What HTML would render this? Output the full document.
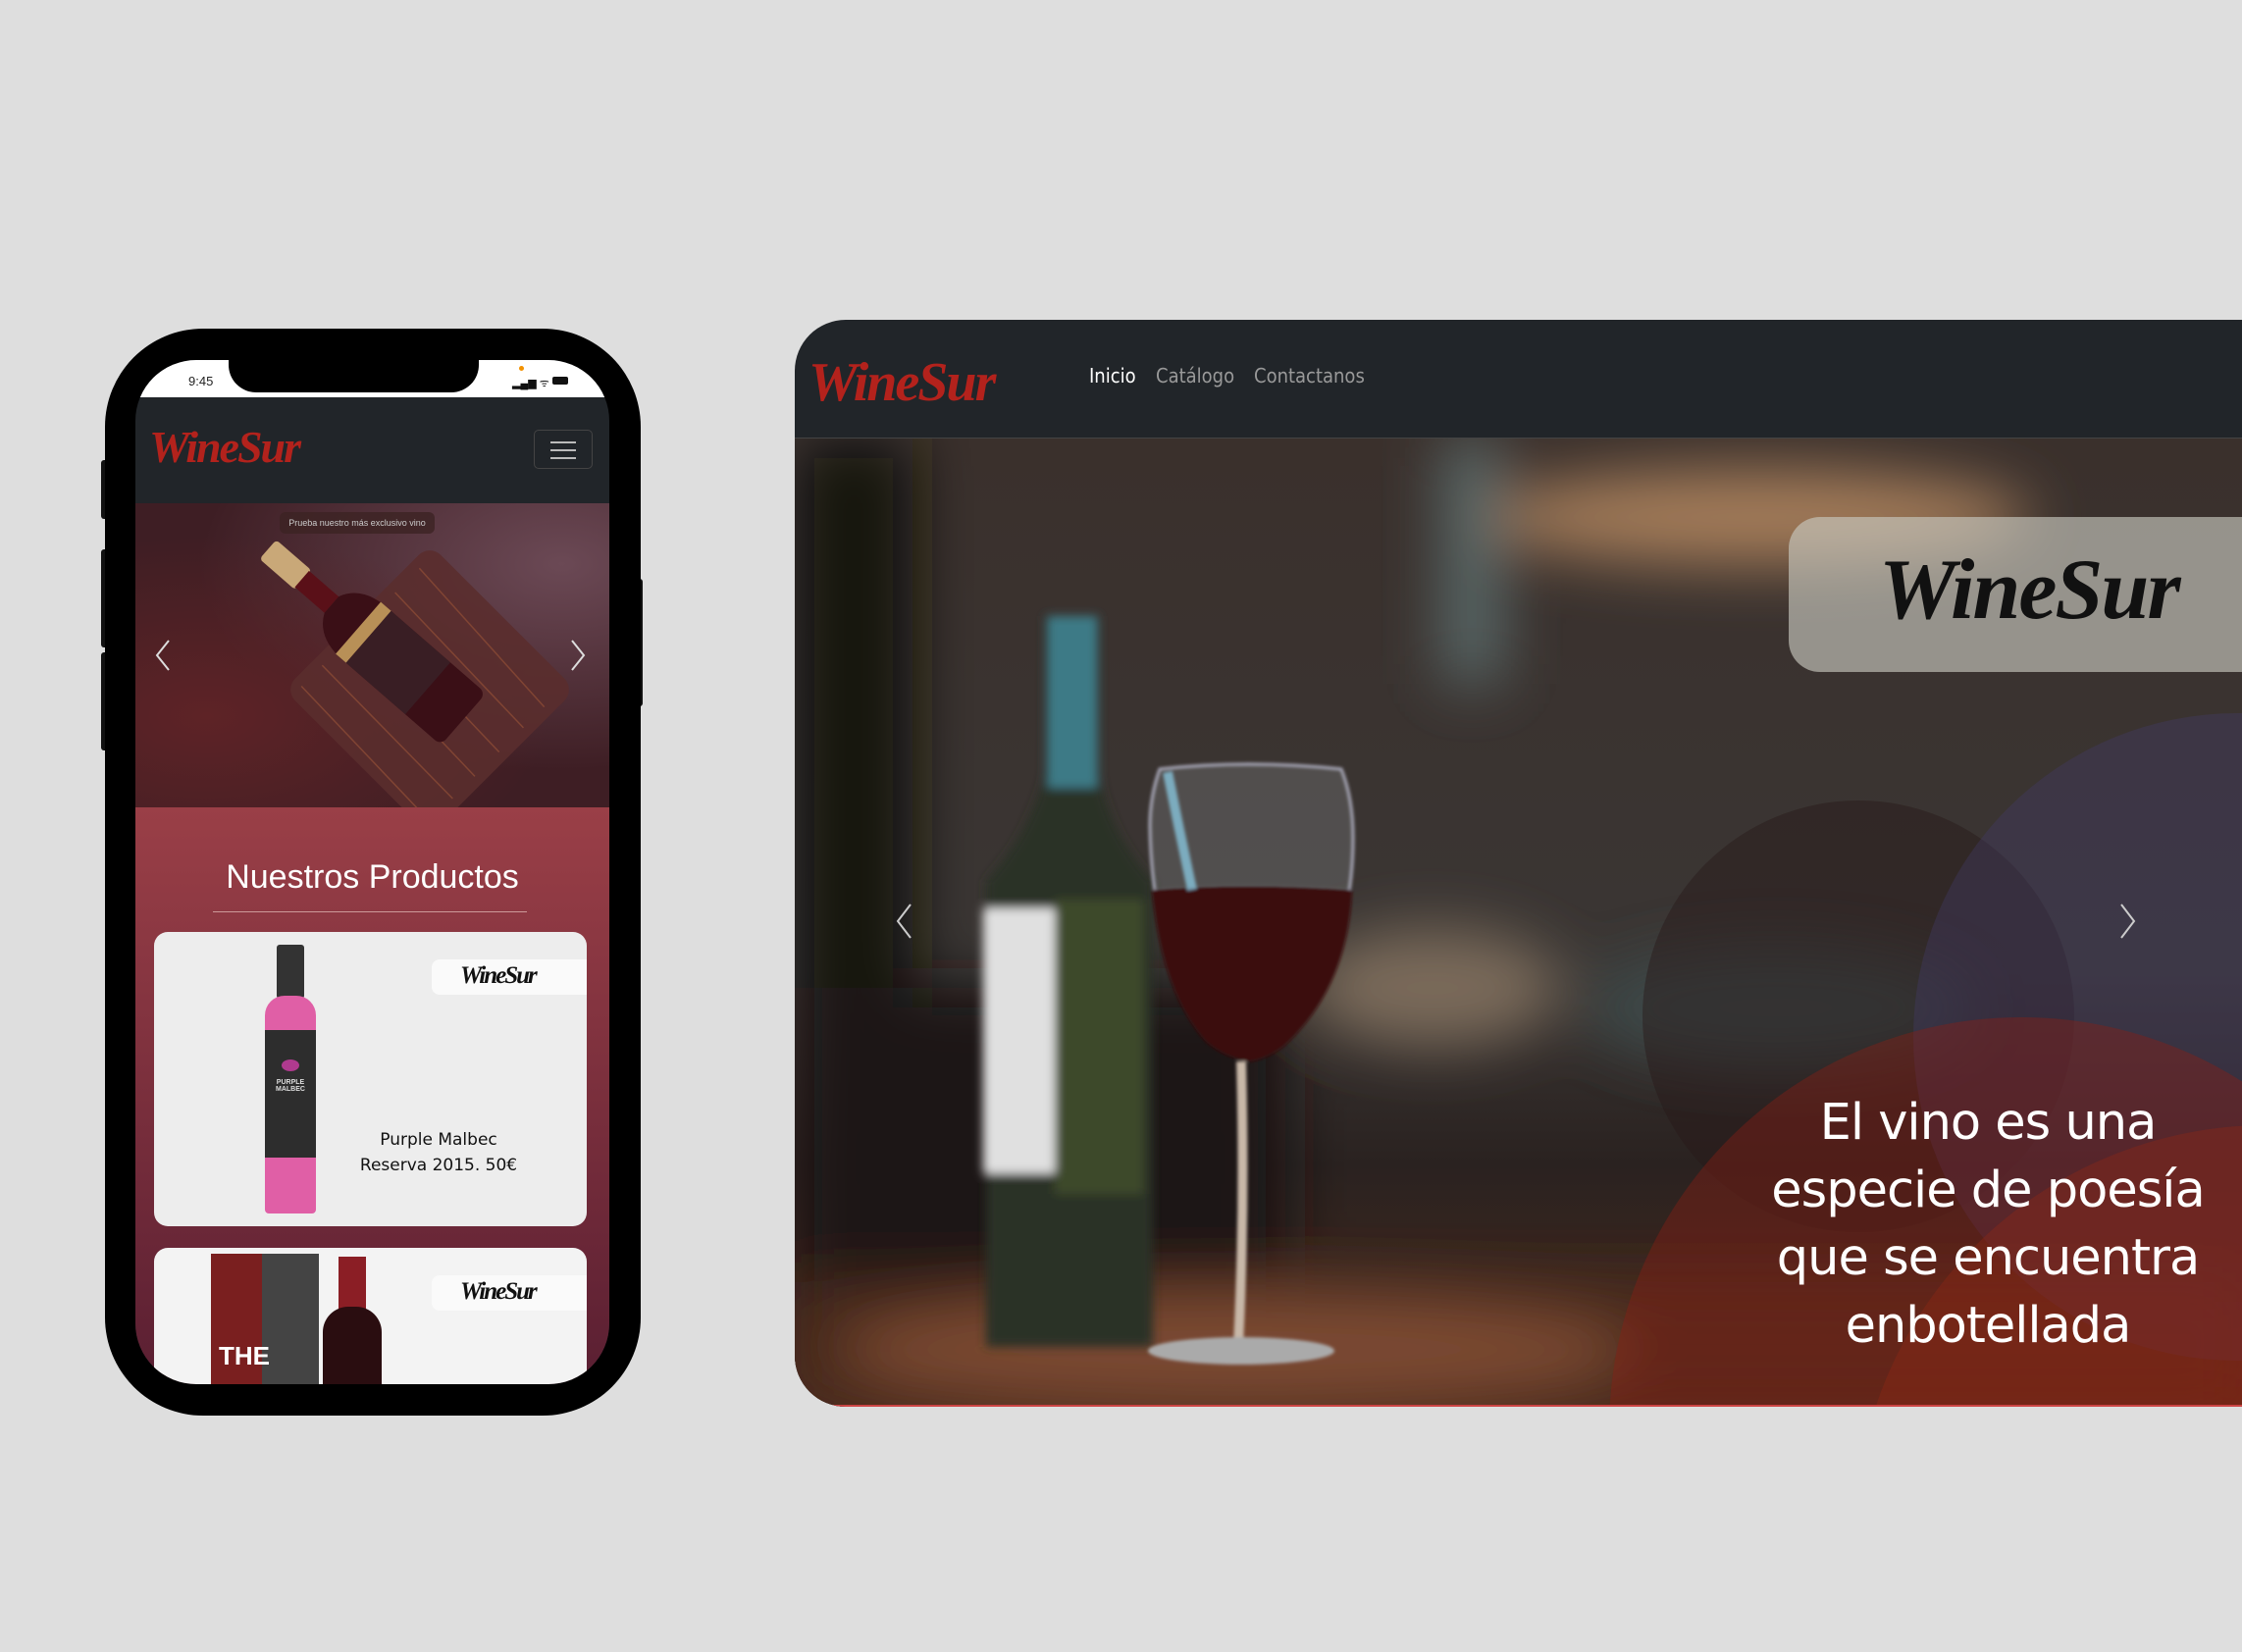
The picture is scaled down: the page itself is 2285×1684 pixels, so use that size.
<!DOCTYPE html>
<html><head><meta charset="utf-8"><style>
*{margin:0;padding:0;box-sizing:border-box}
html{width:2285px;height:1684px;overflow:hidden}
body{width:2285px;height:1684px;background:#dedede;position:relative;overflow:hidden;font-family:"Liberation Sans",sans-serif}
.abs{position:absolute}
.logo{font-family:"Liberation Serif",serif;font-style:italic;font-weight:bold;color:#b3221c;letter-spacing:-2px}
</style></head><body>

<!-- PHONE -->
<div class="abs" style="left:103px;top:469px;width:8px;height:60px;background:#111;border-radius:3px"></div>
<div class="abs" style="left:103px;top:560px;width:8px;height:100px;background:#111;border-radius:3px"></div>
<div class="abs" style="left:103px;top:665px;width:8px;height:100px;background:#111;border-radius:3px"></div>
<div class="abs" style="left:645px;top:590px;width:10px;height:130px;background:#111;border-radius:3px"></div>
<div class="abs" style="left:107px;top:335px;width:546px;height:1108px;background:#000;border-radius:100px"></div>
<div class="abs" style="left:138px;top:367px;width:483px;height:1044px;border-radius:62px;overflow:hidden;background:#212529">
  <div class="abs" style="left:0;top:0;width:483px;height:38px;background:#fff"></div>
  <div class="abs" style="left:95px;top:-5px;width:255px;height:38px;background:#000;border-radius:0 0 28px 28px"></div>
  <div class="abs" style="left:54px;top:14px;font-size:13px;color:#222">9:45</div>
  <div class="abs" style="left:391px;top:6px;width:5px;height:5px;border-radius:50%;background:#f39200"></div>
  <div class="abs" style="left:384px;top:16px;font-size:11px;color:#111">▂▄▆ ᯤ</div>
  <div class="abs" style="left:425px;top:17px;width:16px;height:8px;background:#111;border-radius:2px"></div>
  <div class="abs logo" style="left:14px;top:62px;font-size:46px">WineSur</div>
  <div class="abs" style="left:406px;top:71px;width:60px;height:40px;border:1px solid #444;border-radius:5px">
    <div class="abs" style="left:16px;top:11px;width:26px;height:2px;background:#bbb"></div>
    <div class="abs" style="left:16px;top:19px;width:26px;height:2px;background:#bbb"></div>
    <div class="abs" style="left:16px;top:27px;width:26px;height:2px;background:#bbb"></div>
  </div>
  <!-- carousel -->
  <div class="abs" style="left:0;top:146px;width:483px;height:310px;background:radial-gradient(ellipse at 15% 70%,#5e2326,transparent 60%),radial-gradient(ellipse at 90% 20%,#6b4955,transparent 60%),#3e1e24;overflow:hidden">
    <svg class="abs" style="left:0;top:0" width="483" height="310">
      <g transform="translate(300 190) rotate(45)">
        <rect x="-105" y="-105" width="210" height="210" rx="16" fill="#5a2e2e" opacity=".9"/>
        <g stroke="#8a4a35" stroke-width="1.5" opacity=".8"><line x1="-95" y1="-80" x2="95" y2="-70"/><line x1="-95" y1="-45" x2="95" y2="-40"/><line x1="-95" y1="-10" x2="95" y2="-5"/><line x1="-95" y1="25" x2="95" y2="30"/><line x1="-95" y1="60" x2="95" y2="62"/><line x1="-95" y1="90" x2="95" y2="95"/></g>
      </g>
      <g transform="translate(135 47) rotate(41)">
        <rect x="0" y="-13" width="48" height="26" rx="4" fill="#c9a878"/>
        <rect x="46" y="-11" width="40" height="22" fill="#5a1018"/>
        <path d="M86 -11 q10 -22 40 -24 h130 a8 8 0 0 1 8 8 v54 a8 8 0 0 1 -8 8 h-130 q-30 -2 -40 -24z" fill="#3a0f16"/>
        <rect x="122" y="-35" width="14" height="70" fill="#b89057"/>
        <rect x="136" y="-35" width="80" height="70" fill="#3a2228" opacity=".8"/>
      </g>
      <polyline points="34,140 22,155 34,170" fill="none" stroke="#ddd" stroke-width="2"/>
      <polyline points="445,140 457,155 445,170" fill="none" stroke="#ddd" stroke-width="2"/>
    </svg>
    <div class="abs" style="left:147px;top:9px;width:158px;height:22px;background:rgba(60,35,35,.8);border-radius:6px;color:#ccc;font-size:9px;line-height:22px;text-align:center">Prueba nuestro más exclusivo vino</div>
  </div>
  <!-- products -->
  <div class="abs" style="left:0;top:456px;width:483px;height:588px;overflow:hidden;background:linear-gradient(#9a3f47,#5a1f32)">
    <div class="abs" style="left:0;top:52px;width:483px;text-align:center;color:#fff;font-size:34px">Nuestros Productos</div>
    <div class="abs" style="left:79px;top:106px;width:320px;height:1px;background:#c99"></div>
    <div class="abs" style="left:19px;top:127px;width:441px;height:300px;background:#ededed;border-radius:14px;overflow:hidden">
      <div class="abs" style="left:125px;top:13px;width:28px;height:55px;background:#333;border-radius:3px"></div>
      <div class="abs" style="left:113px;top:65px;width:52px;height:222px;background:#e05fa6;border-radius:20px 20px 4px 4px"></div>
      <div class="abs" style="left:113px;top:100px;width:52px;height:130px;background:#2d2d2d"></div>
      <div class="abs" style="left:130px;top:130px;width:18px;height:12px;background:#b03a8f;border-radius:50%"></div>
      <div class="abs" style="left:114px;top:150px;width:50px;text-align:center;color:#ddd;font-size:7px;font-weight:bold">PURPLE MALBEC</div>
      <div class="abs" style="left:283px;top:28px;width:160px;height:36px;background:#fafafa;border-radius:8px 0 0 8px"></div>
      <div class="abs logo" style="left:312px;top:31px;font-size:25px;color:#111">WineSur</div>
      <div class="abs" style="left:190px;top:199px;width:200px;text-align:center;font-size:17px;color:#111;line-height:26px;font-family:'DejaVu Sans',sans-serif">Purple Malbec<br>Reserva 2015. 50€</div>
    </div>
    <div class="abs" style="left:19px;top:449px;width:441px;height:160px;background:#f3f3f3;border-radius:14px;overflow:hidden">
      <div class="abs" style="left:58px;top:6px;width:52px;height:140px;background:#7a1f1f"></div>
      <div class="abs" style="left:110px;top:6px;width:58px;height:140px;background:#444"></div>
      <div class="abs" style="left:66px;top:95px;color:#fff;font-size:26px;font-weight:bold">THE</div>
      <div class="abs" style="left:188px;top:9px;width:28px;height:60px;background:#8b1e25"></div>
      <div class="abs" style="left:172px;top:60px;width:60px;height:100px;background:#2a0d10;border-radius:26px 26px 0 0"></div>
      <div class="abs" style="left:283px;top:28px;width:160px;height:36px;background:#fafafa;border-radius:8px 0 0 8px"></div>
      <div class="abs logo" style="left:312px;top:31px;font-size:25px;color:#111">WineSur</div>
    </div>
  </div>
</div>

<!-- DESKTOP -->
<div class="abs" style="left:810px;top:326px;width:1475px;height:1108px;border-radius:52px 0 0 52px;overflow:hidden;background:#212529">
  <div class="abs logo" style="left:14px;top:32px;font-size:56px">WineSur</div>
  <div class="abs" style="left:300px;top:45px;font-size:20px;color:#fff;font-family:'DejaVu Sans Condensed','Liberation Sans',sans-serif">Inicio</div>
  <div class="abs" style="left:368px;top:45px;font-size:20px;color:#999;font-family:'DejaVu Sans Condensed','Liberation Sans',sans-serif">Catálogo</div>
  <div class="abs" style="left:468px;top:45px;font-size:20px;color:#999;font-family:'DejaVu Sans Condensed','Liberation Sans',sans-serif">Contactanos</div>
  <div class="abs" style="left:0;top:120px;width:1475px;height:1px;background:#444"></div>
  <div class="abs" style="left:0;top:121px;width:1475px;height:987px;overflow:hidden;background:#2e2622">
    <svg class="abs" style="left:0;top:0" width="1475" height="987">
      <defs>
        <filter id="b" x="-50%" y="-50%" width="200%" height="200%"><feGaussianBlur stdDeviation="30"/></filter>
        <filter id="s"><feGaussianBlur stdDeviation="5"/></filter>
        <filter id="t"><feGaussianBlur stdDeviation="1.5"/></filter>
        <linearGradient id="bg" x1="0" y1="0" x2="0" y2="1"><stop offset="0" stop-color="#3a302c"/><stop offset=".55" stop-color="#3a3634"/><stop offset=".75" stop-color="#2a2220"/><stop offset="1" stop-color="#4a2a1c"/></linearGradient>
      </defs>
      <rect width="1475" height="987" fill="url(#bg)"/>
      <g filter="url(#b)">
        <rect x="0" y="0" width="120" height="987" fill="#181210"/>
        <ellipse cx="980" cy="80" rx="280" ry="50" fill="#a27a58"/>
        <rect x="660" y="0" width="60" height="250" fill="#5a6a6a"/>
        <ellipse cx="650" cy="560" rx="130" ry="60" fill="#7a6a5a"/>
        <ellipse cx="1000" cy="580" rx="200" ry="60" fill="#3c4a4a"/>
        <rect x="0" y="860" width="1475" height="127" fill="#4a2a1a"/>
        <ellipse cx="450" cy="930" rx="400" ry="60" fill="#7a4a30"/>
        <rect x="0" y="560" width="500" height="300" fill="#1e1614"/>
      </g>
      <g filter="url(#s)">
        <path d="M255 181 h55 v160 q10 60 55 110 v475 h-170 v-475 q45 -50 60 -110 z" fill="#2a3326"/>
        <path d="M258 181 h50 v175 h-50z" fill="#3e7a86"/>
        <rect x="192" y="479" width="73" height="270" fill="#e0e0e0"/>
        <rect x="265" y="470" width="90" height="300" fill="#4a5a2e" opacity=".6"/>
      </g>
      <g filter="url(#t)">
        <path d="M362 395 q0 -30 10 -58 q90 -10 185 0 q12 30 12 70 q0 120 -70 190 q-20 15 -35 18 q-25 -3 -45 -20 q-55 -70 -57 -200z" fill="rgba(190,200,205,.18)" stroke="#aab" stroke-width="3"/>
        <path d="M364 460 q95 -8 204 0 q-4 100 -70 160 q-18 13 -34 15 q-25 -3 -45 -20 q-45 -50 -55 -155z" fill="#3a0a0e"/>
        <path d="M380 340 q12 60 25 120" stroke="#8fd4ee" stroke-width="10" fill="none" opacity=".7"/>
        <path d="M455 635 q4 150 -3 290" stroke="#c8b8a8" stroke-width="10" fill="none"/>
        <ellipse cx="455" cy="930" rx="95" ry="14" fill="#aaa"/>
      </g>
      <circle cx="1084" cy="589" r="220" fill="rgba(40,25,25,.45)"/>
      <circle cx="1470" cy="610" r="330" fill="rgba(70,60,110,.35)"/>
      <circle cx="1250" cy="1010" r="420" fill="rgba(140,30,20,.4)"/>
      <circle cx="1500" cy="1120" r="420" fill="rgba(150,40,20,.35)"/>
      <polyline points="118,475 105,492 118,509" fill="none" stroke="#ccc" stroke-width="2"/>
      <polyline points="1352,475 1365,492 1352,509" fill="none" stroke="#ccc" stroke-width="2"/>
    </svg>
    <div class="abs" style="left:1013px;top:80px;width:470px;height:158px;background:rgba(200,200,190,.65);border-radius:32px 0 0 32px"></div>
    <div class="abs logo" style="left:1105px;top:104px;font-size:88px;color:#111">WineSur</div>
    <div class="abs" style="left:966px;top:663px;width:500px;text-align:center;color:#fff;font-size:51px;line-height:69px;font-family:'DejaVu Sans','Liberation Sans',sans-serif;letter-spacing:-1px">El vino es una<br>especie de poesía<br>que se encuentra<br>enbotellada</div>
  </div>
  <div class="abs" style="left:0;top:1106px;width:1475px;height:2px;background:#c44"></div>
</div>
</body></html>
